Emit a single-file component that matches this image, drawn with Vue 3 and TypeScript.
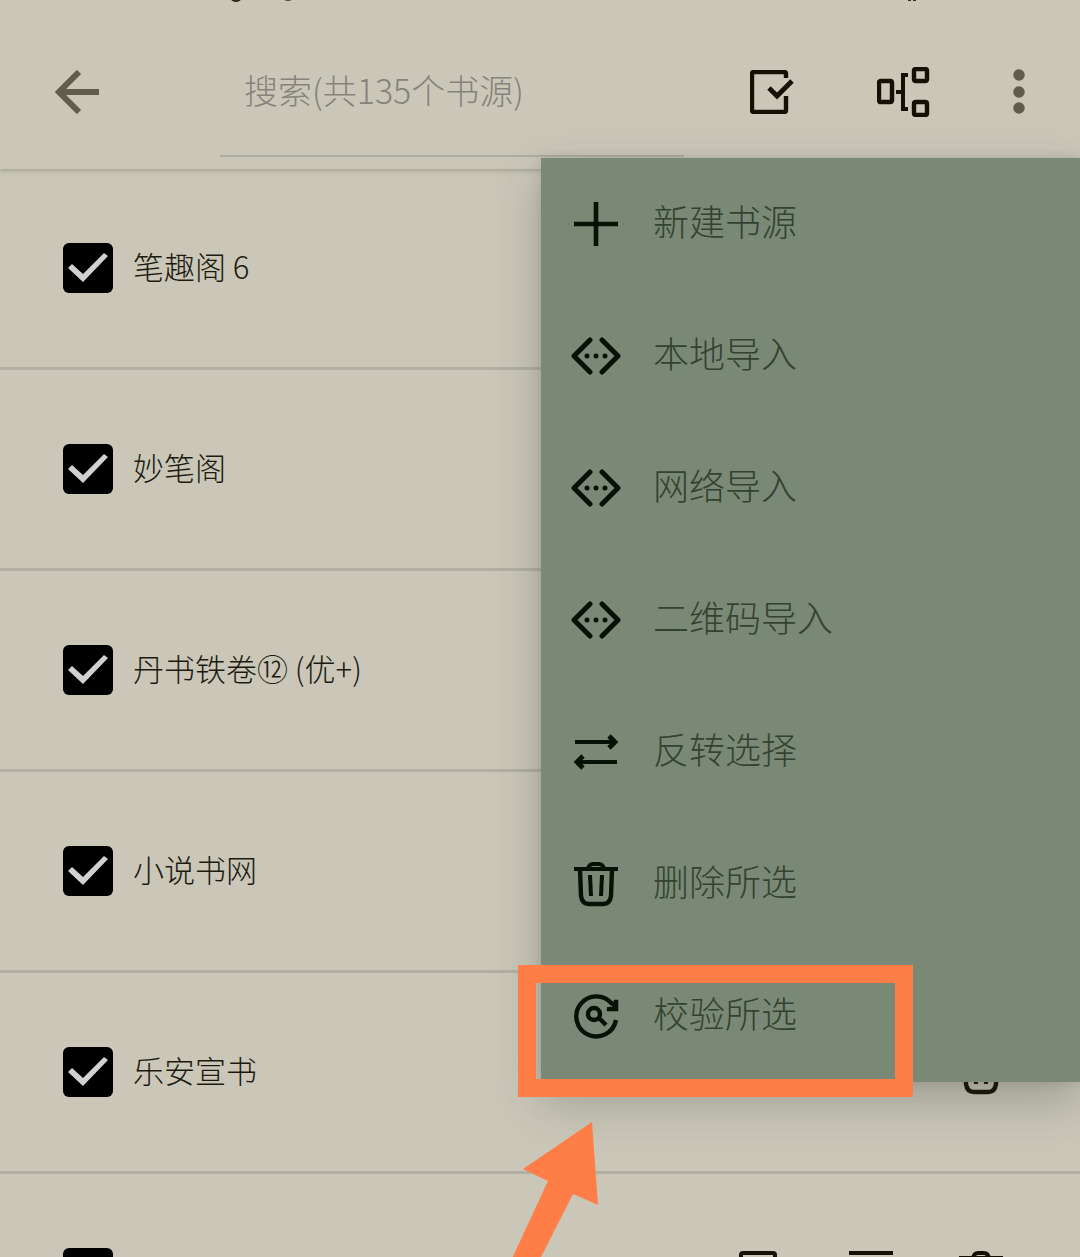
<script setup lang="ts">
import { h, ref } from 'vue'

interface Stroke {
  d: string
  w?: number
  round?: boolean
}

interface IconDef {
  width: number
  height: number
  strokes: Stroke[]
}

const square = (strokes: Stroke[]): IconDef => ({ width: 50, height: 50, strokes })

const code = square([
  { d: 'M19 9 3 25 19 41M31 9 47 25 31 41', w: 5, round: true },
  { d: 'M16 25h0M25 25h0M34 25h0', w: 5, round: true },
])

const icons: Record<string, IconDef> = {
  back: {
    width: 44,
    height: 44,
    strokes: [{ d: 'M44 22H5M24 2 4 22 24 42', w: 6 }],
  },
  select: {
    width: 44,
    height: 44,
    strokes: [
      { d: 'M36 8V4Q36 2 34 2H4Q2 2 2 4V40Q2 42 4 42H34Q36 42 36 40V26', w: 4.4 },
      { d: 'M19 18 27 26 42 11', w: 4.8 },
    ],
  },
  group: {
    width: 53,
    height: 50,
    strokes: [
      { d: 'M4 14H13Q15 14 15 16V33Q15 35 13 35H4Q2 35 2 33V16Q2 14 4 14Z', w: 4.4 },
      { d: 'M39 2H48Q50 2 50 4V12Q50 14 48 14H39Q37 14 37 12V4Q37 2 39 2Z', w: 4.4 },
      { d: 'M39 35H48Q50 35 50 37V46Q50 48 48 48H39Q37 48 37 46V37Q37 35 39 35Z', w: 4.4 },
      { d: 'M31 8H26V42H31M19 25H26' },
    ],
  },
  more: {
    width: 12,
    height: 50,
    strokes: [{ d: 'M6 8h0M6 25h0M6 41h0', w: 11.5, round: true }],
  },
  plus: square([{ d: 'M25 3V47M3 25H47', w: 4.6 }]),
  code,
  swap: square([
    { d: 'M4 15H45M46 35H5' },
    { d: 'M38 9 44 15 38 21M12 29 6 35 12 41', w: 4.8 },
  ]),
  trash: square([
    { d: 'M3 10H47M17 10Q18 5 22 5H28Q32 5 33 10' },
    { d: 'M9 11 10 37Q11 45 18 45H32Q39 45 40 37L41 11', w: 4.4 },
    { d: 'M19 16 20 37M31 16 30 37' },
  ]),
  verify: square([
    { d: 'M45 29A20 20 0 1 1 41 13', w: 4.4 },
    { d: 'M47 9V20H36V18L43 13V9Z', w: 0.5 },
    { d: 'M45 9V18H36M40 11 45 17' },
    { d: 'M29 23A6 6 0 1 1 17 23A6 6 0 1 1 29 23M27 26 35 34', w: 4.4 },
  ]),
  edit: square([
    { d: 'M39 24V7Q39 5 37 5H7Q5 5 5 7V43Q5 45 7 45H22' },
    { d: 'M28 45 45 28' },
  ]),
  lines: square([{ d: 'M3 5H47M3 25H47M3 45H47' }]),
}

const Icon = (props: { name: string }) => {
  const icon = icons[props.name]
  return h(
    'svg',
    {
      class: 'icon',
      width: icon.width,
      height: icon.height,
      viewBox: `0 0 ${icon.width} ${icon.height}`,
      fill: 'none',
      stroke: 'currentColor',
      'aria-hidden': 'true',
    },
    icon.strokes.map((s) =>
      h('path', {
        d: s.d,
        'stroke-width': s.w ?? 4,
        'stroke-linecap': s.round ? 'round' : 'butt',
        'stroke-linejoin': s.round ? 'round' : 'miter',
      }),
    ),
  )
}
Icon.props = ['name']

const query = ref('')

const sources = ref([
  { name: '笔趣阁 6', checked: true },
  { name: '妙笔阁', checked: true },
  { name: '丹书铁卷⑫ (优+)', checked: true },
  { name: '小说书网', checked: true },
  { name: '乐安宣书', checked: true },
  { name: '小小书屋', checked: true },
])

const rowActions = [
  { icon: 'edit', label: '编辑' },
  { icon: 'lines', label: '排序' },
  { icon: 'trash', label: '删除' },
]

const menu = [
  { icon: 'plus', label: '新建书源' },
  { icon: 'code', label: '本地导入' },
  { icon: 'code', label: '网络导入' },
  { icon: 'code', label: '二维码导入' },
  { icon: 'swap', label: '反转选择' },
  { icon: 'trash', label: '删除所选' },
  { icon: 'verify', label: '校验所选', marked: true },
]
</script>

<template>
  <div class="page">
    <header class="bar">
      <svg class="status" height="3" width="100%" aria-hidden="true">
        <ellipse cx="236" cy="-1" rx="5" ry="3" fill="#2c281c" />
        <ellipse cx="288" cy="-2" rx="5" ry="3" fill="#4a463a" />
        <path d="M908 0h3v1h-3zM913 0h3v1h-3z" fill="#2c281c" />
      </svg>
      <button class="icon-button muted" type="button" aria-label="返回"><Icon name="back" /></button>
      <input
        v-model="query"
        class="search"
        type="text"
        aria-label="搜索书源"
        placeholder="搜索(共135个书源)"
      />
      <div class="tools">
        <button class="icon-button" type="button" aria-label="全选"><Icon name="select" /></button>
        <button class="icon-button" type="button" aria-label="分组"><Icon name="group" /></button>
        <button class="icon-button muted" type="button" aria-label="更多"><Icon name="more" /></button>
      </div>
    </header>

    <ul class="list">
      <li v-for="source in sources" :key="source.name" class="row">
        <label class="source">
          <input v-model="source.checked" class="tick" type="checkbox" />
          <span class="source-name">{{ source.name }}</span>
        </label>
        <div class="actions">
          <button
            v-for="action in rowActions"
            :key="action.icon"
            class="icon-button"
            type="button"
            :aria-label="action.label"
          >
            <Icon :name="action.icon" />
          </button>
        </div>
      </li>
    </ul>

    <nav class="menu">
      <div v-for="item in menu" :key="item.label" class="entry">
        <button class="menu-item" type="button">
          <Icon :name="item.icon" />
          <span class="menu-label">{{ item.label }}</span>
        </button>
        <template v-if="item.marked">
          <div class="frame"></div>
          <svg class="pointer" width="96" height="150" viewBox="0 0 96 150" aria-hidden="true">
            <path d="M80 0 86 83 61 72 25 143 -3 143 36 59 11 47Z" fill="#ff7d46" />
          </svg>
        </template>
      </div>
    </nav>
  </div>
</template>

<style>
body {
  margin: 0;
  background: #cac7b9;
}
</style>

<style scoped>
.page {
  position: relative;
  height: 100vh;
  overflow: hidden;
  background: #cac7b9;
  color: #1c190e;
  font-family: 'Noto Sans CJK SC', 'Noto Sans', sans-serif;
  font-weight: 300;
}

.page *,
.page *::before {
  box-sizing: border-box;
}

button,
input {
  margin: 0;
  padding: 0;
  border: 0;
  border-radius: 0;
  background: none;
  color: inherit;
  font: inherit;
}

.icon {
  display: block;
  flex: none;
}

.icon-button {
  display: block;
  color: #141004;
}

.muted {
  color: #605c4e;
}

.bar {
  position: relative;
  display: flex;
  align-items: center;
  padding: 26px 55px 12px;
  box-shadow: 0 1px 5px rgba(70, 75, 55, 0.4);
}

.status {
  position: absolute;
  top: 0;
  left: 0;
}

.search {
  flex: 1;
  min-width: 0;
  height: 131px;
  margin: 0 66px 0 121px;
  padding: 0 24px 2px;
  border-bottom: 2px solid #aeafa0;
  outline: none;
  font-size: 34px;
}

.search::placeholder {
  color: #85837a;
  opacity: 1;
}

.tools {
  display: flex;
  align-items: center;
  gap: 83px;
}

.list {
  margin: 0;
  padding: 0;
  list-style: none;
}

.row {
  display: flex;
  align-items: center;
  justify-content: space-between;
  height: 201px;
  padding: 0 74px 0 63px;
  border-bottom: 3px solid #b2b0a2;
}

.source {
  display: flex;
  align-items: center;
  gap: 20px;
}

.source-name {
  padding-bottom: 4px;
  font-size: 31px;
  line-height: 44px;
}

.tick {
  flex: none;
  width: 50px;
  height: 50px;
  border-radius: 6px;
  appearance: none;
  background: #000;
}

.tick:checked::before {
  content: '';
  display: block;
  width: 50px;
  height: 50px;
  background: #d2d1d2;
  clip-path: polygon(5px 25px, 9px 21px, 20px 31px, 41px 10px, 45px 13px, 20px 39px);
}

.actions {
  display: flex;
  gap: 60px;
}

.menu {
  position: absolute;
  top: 158px;
  right: 0;
  width: calc(50% - 1px);
  background: #798975;
  box-shadow:
    0 20px 44px rgba(50, 55, 45, 0.28),
    0 0 10px rgba(50, 55, 45, 0.15);
}

.entry {
  position: relative;
}

.menu-item {
  display: flex;
  align-items: center;
  gap: 32px;
  width: 100%;
  height: 132px;
  padding: 0 30px;
  color: #061205;
  text-align: left;
}

.menu-label {
  padding-bottom: 8px;
  color: #34432f;
  font-size: 36px;
  line-height: 48px;
}

.frame {
  position: absolute;
  top: 15px;
  left: -23px;
  width: 395px;
  height: 132px;
  border: 18px solid #ff7d46;
  pointer-events: none;
}

.pointer {
  position: absolute;
  top: 172px;
  left: -29px;
  pointer-events: none;
}
</style>
